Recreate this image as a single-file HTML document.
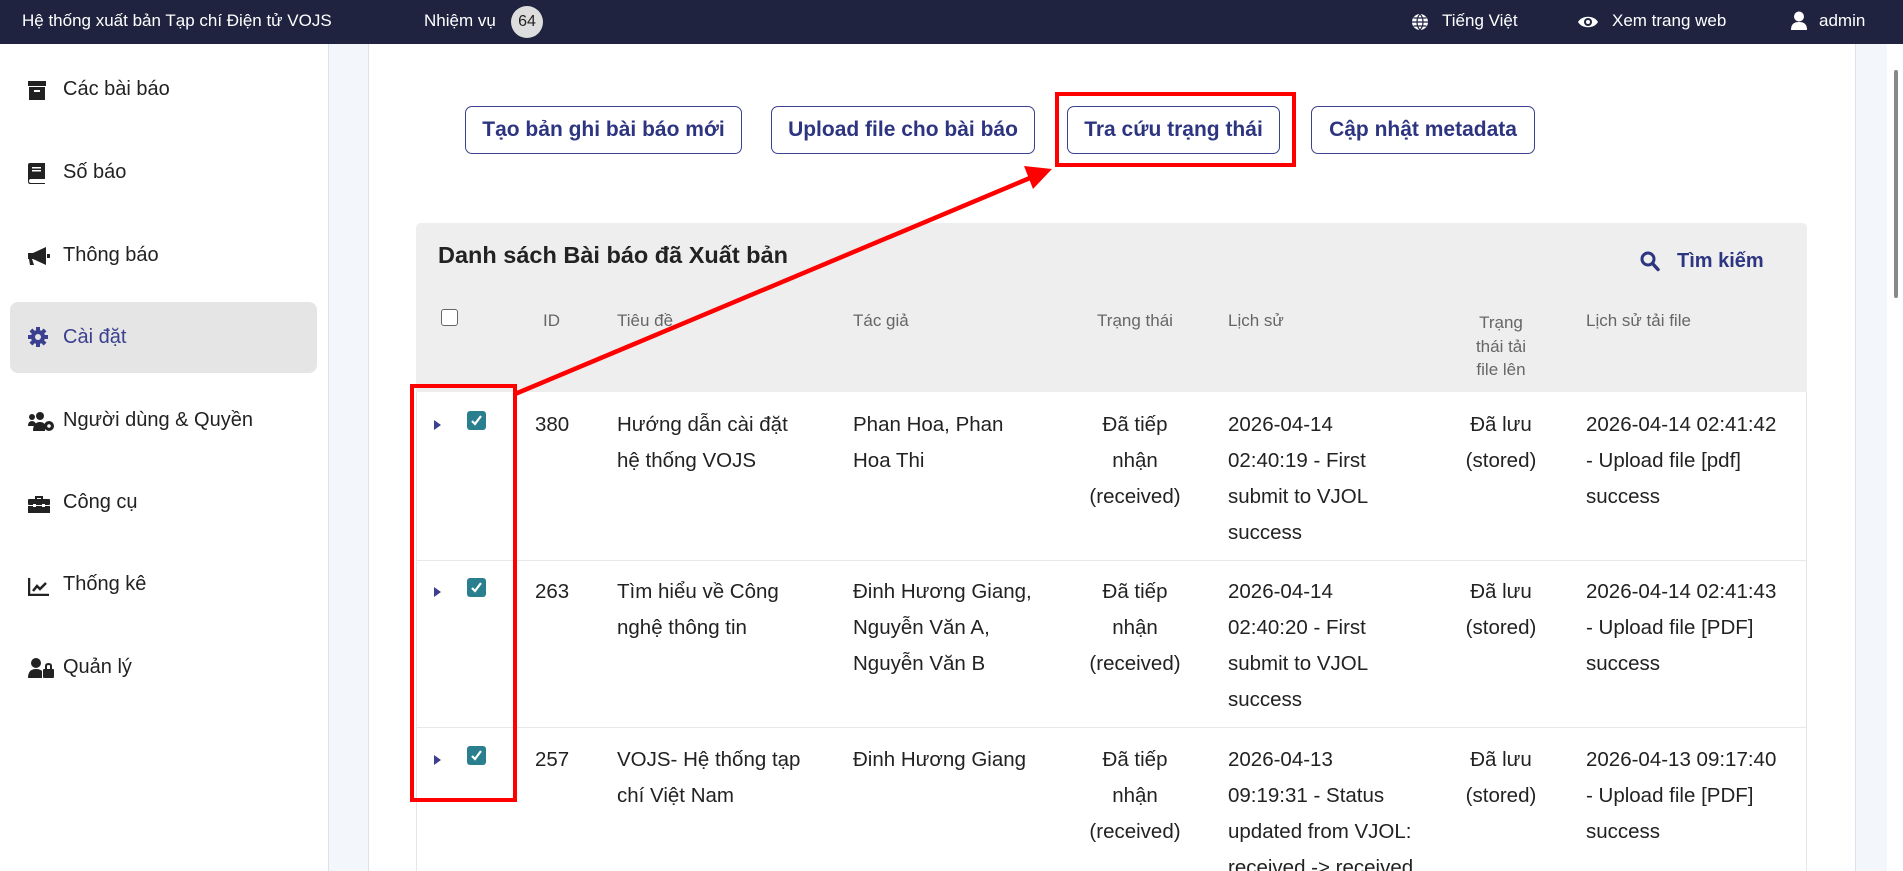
<!DOCTYPE html>
<html style="width:1903px;height:871px;overflow:hidden"><head><meta charset="utf-8"><style>
*{margin:0;padding:0;box-sizing:border-box}
body{width:1903px;height:871px;overflow:hidden;position:relative;background:#fff;font-family:"Liberation Sans","DejaVu Sans",sans-serif;color:#222}
.a{position:absolute;white-space:nowrap}
.top{position:absolute;left:0;top:0;width:1903px;height:44px;background:#1f2340;color:#fff;font-size:17px}
.top .a{top:11px}
.side{position:absolute;left:0;top:44px;width:328px;height:827px;background:#fff}
.strip{position:absolute;left:328px;top:44px;width:41px;height:827px;background:#f3f6fb;border-left:1px solid #dde2ea;border-right:1px solid #dde2ea}
.rstrip{position:absolute;left:1855px;top:44px;width:32px;height:827px;background:#f3f6fb;border-left:1px solid #dde2ea}
.sb{position:absolute;left:1887px;top:44px;width:16px;height:827px;background:#fff}
.item{position:absolute;left:63px;font-size:20px;color:#222}
.ic{position:absolute;left:28px}
.btn{position:absolute;top:106px;height:48px;border:1.5px solid #3b418f;border-radius:7px;color:#2e3580;font-weight:bold;font-size:21px;display:flex;align-items:center;justify-content:center}
.panel{position:absolute;left:416px;top:223px;width:1391px;height:648px;border:1px solid #e6e6e6;border-bottom:none;border-radius:5px 5px 0 0;background:#fff}
.ph{position:absolute;left:416px;top:223px;width:1391px;height:169px;background:#eeeeee;border-radius:5px 5px 0 0}
.h{color:#666;font-size:17px;position:absolute}
.c{position:absolute;font-size:20.5px;line-height:36px;color:#222}
.ctr{text-align:center}
.sep{position:absolute;left:417px;width:1389px;height:1px;background:#e8e8e8}
.cb{position:absolute;left:467px;width:19px;height:19px;background:#2a7f8f;border-radius:3px}
.tri{position:absolute;left:434px;width:0;height:0;border-top:5px solid transparent;border-bottom:5px solid transparent;border-left:7px solid #3a3f8f}
</style></head><body>
<div class="top">
 <div class="a" style="left:22px">Hệ thống xuất bản Tạp chí Điện tử VOJS</div>
 <div class="a" style="left:424px">Nhiệm vụ</div>
 <div class="a" style="left:511px;top:6px;width:32px;height:32px;border-radius:16px;background:#ddd;color:#222;text-align:center;line-height:32px;font-size:16px">64</div>
 <svg class="a" style="left:1411px;top:13px" width="18" height="18" viewBox="0 0 18 18"><circle cx="9" cy="9" r="8" fill="#fff"/><path d="M1 9H17M9 1C5 5 5 13 9 17M9 1C13 5 13 13 9 17M2.5 5H15.5M2.5 13H15.5" stroke="#1f2340" stroke-width="1.2" fill="none"/></svg>
 <div class="a" style="left:1442px">Tiếng Việt</div>
 <svg class="a" style="left:1577px;top:14px" width="22" height="16" viewBox="0 0 22 16"><path d="M1 8C5 1 17 1 21 8C17 15 5 15 1 8Z" fill="#fff"/><circle cx="11" cy="8" r="4" fill="#1f2340"/><circle cx="11" cy="8" r="2" fill="#fff"/></svg>
 <div class="a" style="left:1612px">Xem trang web</div>
 <svg class="a" style="left:1790px;top:11px" width="18" height="20" viewBox="0 0 18 20"><circle cx="9" cy="5.5" r="5" fill="#fff"/><path d="M1 19C1 13 4 11 9 11C14 11 17 13 17 19Z" fill="#fff"/></svg>
 <div class="a" style="left:1819px">admin</div>
</div>
<div class="side">
 <div style="position:absolute;left:10px;top:258px;width:307px;height:71px;background:#e5e5e5;border-radius:8px"></div>
</div>
<svg class="ic" style="top:81px" width="18" height="20" viewBox="0 0 18 20"><rect x="0" y="0" width="18" height="5" fill="#222"/><rect x="1" y="6" width="16" height="13" fill="#222"/><rect x="6" y="9" width="6" height="2" fill="#fff"/></svg>
<div class="item" style="top:78px">Các bài báo</div>
<svg class="ic" style="top:163px" width="17" height="21" viewBox="0 0 17 21"><path d="M0 2Q0 0 2 0H17V16H3Q1 16 1 18Q1 20 3 20H17V21H2Q0 21 0 18Z" fill="#222"/><rect x="4" y="4" width="9" height="1.5" fill="#fff"/><rect x="4" y="7" width="9" height="1.5" fill="#fff"/></svg>
<div class="item" style="top:161px">Số báo</div>
<svg class="ic" style="top:246px" width="22" height="20" viewBox="0 0 22 20"><path d="M0 7H5L18 1V19L5 13H4L6 19H2L1 13H0Z" fill="#222"/><rect x="19" y="8" width="3" height="4" fill="#222"/></svg>
<div class="item" style="top:244px">Thông báo</div>
<svg class="ic" style="top:327px" width="20" height="20" viewBox="0 0 20 20"><g fill="#3a3f8f"><circle cx="10" cy="10" r="7"/><rect x="8" y="0" width="4" height="20"/><rect x="0" y="8" width="20" height="4"/><rect x="8" y="0" width="4" height="20" transform="rotate(45 10 10)"/><rect x="8" y="0" width="4" height="20" transform="rotate(-45 10 10)"/></g><circle cx="10" cy="10" r="3" fill="#e5e5e5"/></svg>
<div class="item" style="top:326px;color:#3a3f8f">Cài đặt</div>
<svg class="ic" style="top:412px" width="26" height="20" viewBox="0 0 26 20"><g fill="#222"><circle cx="4" cy="5" r="3"/><circle cx="12" cy="4" r="4"/><path d="M0 14Q0 9 4 9Q8 9 8 14Z"/><path d="M5 19Q5 10 12 10Q16 10 17 13V19Z"/><circle cx="21" cy="14" r="5"/></g><circle cx="21" cy="14" r="1.8" fill="#fff"/></svg>
<div class="item" style="top:409px">Người dùng &amp; Quyền</div>
<svg class="ic" style="top:495px" width="22" height="18" viewBox="0 0 22 18"><path d="M7 4V1H15V4H13V3H9V4Z" fill="#222"/><rect x="0" y="4" width="22" height="6" rx="1" fill="#222"/><rect x="0" y="11" width="22" height="7" fill="#222"/><rect x="5" y="9" width="3" height="3" fill="#fff"/><rect x="14" y="9" width="3" height="3" fill="#fff"/></svg>
<div class="item" style="top:491px">Công cụ</div>
<svg class="ic" style="top:578px" width="21" height="18" viewBox="0 0 21 18"><path d="M1 0V17H21" stroke="#222" stroke-width="2.5" fill="none"/><path d="M5 13L9 8L12 11L18 5" stroke="#222" stroke-width="2.5" fill="none"/></svg>
<div class="item" style="top:573px">Thống kê</div>
<svg class="ic" style="top:658px" width="26" height="20" viewBox="0 0 26 20"><g fill="#222"><circle cx="8" cy="5" r="5"/><path d="M0 20Q0 11 8 11Q12 11 14 13V20Z"/><rect x="15" y="11" width="11" height="9" rx="1"/><path d="M17 11V8Q17 5 20.5 5Q24 5 24 8V11H22V8Q22 7 20.5 7Q19 7 19 8V11Z"/></g></svg>
<div class="item" style="top:656px">Quản lý</div>
<div class="strip"></div>
<div class="rstrip"></div>
<div class="sb"><div style="position:absolute;left:7px;top:26px;width:4px;height:228px;background:#888;border-radius:2px"></div></div>

<div class="btn" style="left:465px;width:277px">Tạo bản ghi bài báo mới</div>
<div class="btn" style="left:771px;width:264px">Upload file cho bài báo</div>
<div class="btn" style="left:1067px;width:213px">Tra cứu trạng thái</div>
<div class="btn" style="left:1311px;width:224px">Cập nhật metadata</div>

<div class="panel"></div>
<div class="ph"></div>
<div class="a" style="left:438px;top:242px;font-size:23.5px;font-weight:bold;color:#222">Danh sách Bài báo đã Xuất bản</div>
<svg class="a" style="left:1640px;top:251px" width="20" height="21" viewBox="0 0 20 21"><circle cx="8" cy="8" r="6" stroke="#2e3580" stroke-width="3" fill="none"/><path d="M12.5 12.5L18 18.5" stroke="#2e3580" stroke-width="3.5" stroke-linecap="round"/></svg>
<div class="a" style="left:1677px;top:250px;font-size:20px;font-weight:bold;color:#2e3580">Tìm kiếm</div>

<div class="a" style="left:441px;top:309px;width:17px;height:17px;border:1.5px solid #666;border-radius:3px;background:#fff"></div>
<div class="h" style="left:543px;top:311px">ID</div>
<div class="h" style="left:617px;top:311px">Tiêu đề</div>
<div class="h" style="left:853px;top:311px">Tác giả</div>
<div class="h" style="left:1085px;top:311px;width:100px;text-align:center">Trạng thái</div>
<div class="h" style="left:1228px;top:311px">Lịch sử</div>
<div class="h" style="left:1466px;top:311px;width:70px;text-align:center;line-height:23.5px;white-space:normal">Trạng thái tải file lên</div>
<div class="h" style="left:1586px;top:311px">Lịch sử tải file</div>

<!-- row 1 -->
<div class="tri" style="top:420px"></div><div class="cb" style="top:411px"></div>
<svg class="a" style="left:470px;top:414px" width="13" height="13" viewBox="0 0 13 13"><path d="M2 7L5 10L11 2" stroke="#fff" stroke-width="2.2" fill="none"/></svg>
<div class="c" style="left:535px;top:407px">380</div>
<div class="c" style="left:617px;top:407px">Hướng dẫn cài đặt<br>hệ thống VOJS</div>
<div class="c" style="left:853px;top:407px">Phan Hoa, Phan<br>Hoa Thi</div>
<div class="c ctr" style="left:1075px;top:407px;width:120px">Đã tiếp<br>nhận<br>(received)</div>
<div class="c" style="left:1228px;top:407px">2026-04-14<br>02:40:19 - First<br>submit to VJOL<br>success</div>
<div class="c ctr" style="left:1446px;top:407px;width:110px">Đã lưu<br>(stored)</div>
<div class="c" style="left:1586px;top:407px">2026-04-14 02:41:42<br>- Upload file [pdf]<br>success</div>
<div class="sep" style="top:560px"></div>
<!-- row 2 -->
<div class="tri" style="top:587px"></div><div class="cb" style="top:578px"></div>
<svg class="a" style="left:470px;top:581px" width="13" height="13" viewBox="0 0 13 13"><path d="M2 7L5 10L11 2" stroke="#fff" stroke-width="2.2" fill="none"/></svg>
<div class="c" style="left:535px;top:574px">263</div>
<div class="c" style="left:617px;top:574px">Tìm hiểu về Công<br>nghệ thông tin</div>
<div class="c" style="left:853px;top:574px">Đinh Hương Giang,<br>Nguyễn Văn A,<br>Nguyễn Văn B</div>
<div class="c ctr" style="left:1075px;top:574px;width:120px">Đã tiếp<br>nhận<br>(received)</div>
<div class="c" style="left:1228px;top:574px">2026-04-14<br>02:40:20 - First<br>submit to VJOL<br>success</div>
<div class="c ctr" style="left:1446px;top:574px;width:110px">Đã lưu<br>(stored)</div>
<div class="c" style="left:1586px;top:574px">2026-04-14 02:41:43<br>- Upload file [PDF]<br>success</div>
<div class="sep" style="top:727px"></div>
<!-- row 3 -->
<div class="tri" style="top:755px"></div><div class="cb" style="top:746px"></div>
<svg class="a" style="left:470px;top:749px" width="13" height="13" viewBox="0 0 13 13"><path d="M2 7L5 10L11 2" stroke="#fff" stroke-width="2.2" fill="none"/></svg>
<div class="c" style="left:535px;top:742px">257</div>
<div class="c" style="left:617px;top:742px">VOJS- Hệ thống tạp<br>chí Việt Nam</div>
<div class="c" style="left:853px;top:742px">Đinh Hương Giang</div>
<div class="c ctr" style="left:1075px;top:742px;width:120px">Đã tiếp<br>nhận<br>(received)</div>
<div class="c" style="left:1228px;top:742px;height:129px;overflow:hidden">2026-04-13<br>09:19:31 - Status<br>updated from VJOL:<br>received -&gt; received</div>
<div class="c ctr" style="left:1446px;top:742px;width:110px">Đã lưu<br>(stored)</div>
<div class="c" style="left:1586px;top:742px">2026-04-13 09:17:40<br>- Upload file [PDF]<br>success</div>

<!-- red annotations -->
<div class="a" style="left:1055px;top:92px;width:241px;height:75px;border:4px solid #f00"></div>
<div class="a" style="left:410px;top:384px;width:107px;height:418px;border:4px solid #f00"></div>
<svg class="a" style="left:0;top:0" width="1903" height="871" viewBox="0 0 1903 871"><path d="M515 394L1030 178" stroke="#f00" stroke-width="4.5" fill="none"/><path d="M1052 169L1024 166L1033 189Z" fill="#f00"/></svg>
</body></html>
